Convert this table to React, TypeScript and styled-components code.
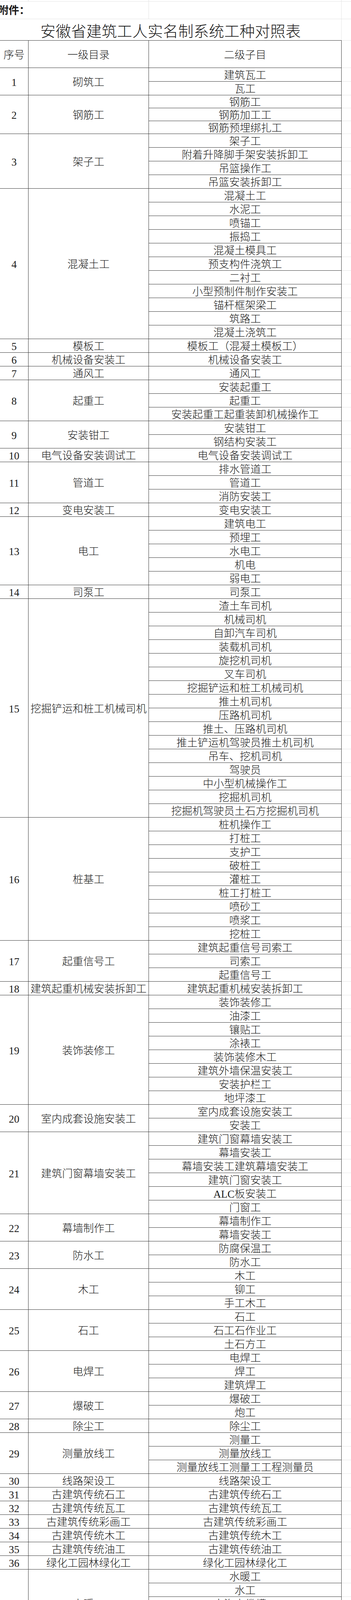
import * as React from 'react';
import styled, { createGlobalStyle } from 'styled-components';

const INK = '#1a1a1a';
const RULE = '#3a3a3a';
const GRID = '#e4e4e4';

const GlobalStyle = createGlobalStyle`
  html, body {
    margin: 0;
    padding: 0;
    background: #fff;
    overflow: hidden;
  }
  body {
    font-family: "Liberation Serif", "Noto Sans CJK SC", serif;
    color: ${INK};
  }
`;

// 一级目录 + 二级子目
const groups: [string, string[]][] = [
  ['砌筑工', ['建筑瓦工', '瓦工']],
  ['钢筋工', ['钢筋工', '钢筋加工工', '钢筋预埋绑扎工']],
  ['架子工', ['架子工', '附着升降脚手架安装拆卸工', '吊篮操作工', '吊篮安装拆卸工']],
  ['混凝土工', ['混凝土工', '水泥工', '喷锚工', '振捣工', '混凝土模具工', '预支构件浇筑工', '二衬工', '小型预制件制作安装工', '锚杆框架梁工', '筑路工', '混凝土浇筑工']],
  ['模板工', ['模板工（混凝土模板工）']],
  ['机械设备安装工', ['机械设备安装工']],
  ['通风工', ['通风工']],
  ['起重工', ['安装起重工', '起重工', '安装起重工起重装卸机械操作工']],
  ['安装钳工', ['安装钳工', '钢结构安装工']],
  ['电气设备安装调试工', ['电气设备安装调试工']],
  ['管道工', ['排水管道工', '管道工', '消防安装工']],
  ['变电安装工', ['变电安装工']],
  ['电工', ['建筑电工', '预埋工', '水电工', '机电', '弱电工']],
  ['司泵工', ['司泵工']],
  ['挖掘铲运和桩工机械司机', ['渣土车司机', '机械司机', '自卸汽车司机', '装载机司机', '旋挖机司机', '叉车司机', '挖掘铲运和桩工机械司机', '推土机司机', '压路机司机', '推土、压路机司机', '推土铲运机驾驶员推土机司机', '吊车、挖机司机', '驾驶员', '中小型机械操作工', '挖掘机司机', '挖掘机驾驶员土石方挖掘机司机']],
  ['桩基工', ['桩机操作工', '打桩工', '支护工', '破桩工', '灌桩工', '桩工打桩工', '喷砂工', '喷浆工', '挖桩工']],
  ['起重信号工', ['建筑起重信号司索工', '司索工', '起重信号工']],
  ['建筑起重机械安装拆卸工', ['建筑起重机械安装拆卸工']],
  ['装饰装修工', ['装饰装修工', '油漆工', '镶贴工', '涂裱工', '装饰装修木工', '建筑外墙保温安装工', '安装护栏工', '地坪漆工']],
  ['室内成套设施安装工', ['室内成套设施安装工', '安装工']],
  ['建筑门窗幕墙安装工', ['建筑门窗幕墙安装工', '幕墙安装工', '幕墙安装工建筑幕墙安装工', '建筑门窗安装工', 'ALC板安装工', '门窗工']],
  ['幕墙制作工', ['幕墙制作工', '幕墙安装工']],
  ['防水工', ['防腐保温工', '防水工']],
  ['木工', ['木工', '铆工', '手工木工']],
  ['石工', ['石工', '石工石作业工', '土石方工']],
  ['电焊工', ['电焊工', '焊工', '建筑焊工']],
  ['爆破工', ['爆破工', '炮工']],
  ['除尘工', ['除尘工']],
  ['测量放线工', ['测量工', '测量放线工', '测量放线工测量工工程测量员']],
  ['线路架设工', ['线路架设工']],
  ['古建筑传统石工', ['古建筑传统石工']],
  ['古建筑传统瓦工', ['古建筑传统瓦工']],
  ['古建筑传统彩画工', ['古建筑传统彩画工']],
  ['古建筑传统木工', ['古建筑传统木工']],
  ['古建筑传统油工', ['古建筑传统油工']],
  ['绿化工园林绿化工', ['绿化工园林绿化工']],
  ['水暖工', ['水暖工', '水工', '水沟电缆槽工', '水井工', '看水工']],
  ['建筑起重机械司机', ['建筑起重机械司机']],
  ['金属工', ['金属工']],
  ['管理人员', ['安全员', '材料员', '资料员', '技术员', '财务', '仓库管理员', '实验员', '土工试验员', '质检员', '其他管理人员']],
  ['杂工', ['值班员', '辅助工（小工）', '厨师', '炊事员', '帮厨', '后勤', '保洁员', '清洁工', '道路巡视养护工道路养护工', '机动清扫工道路清扫工', '环卫机动车驾驶员', '保安']],
  ['其他', ['修理工', '机械维修保养工', '工程机械修理工', '重油制气工（油制气工）', '盾构机操作工', '隧道开挖工', '台车工', '试验工', '智能楼宇管理员', '电梯安装维修工', '司钻员', '接触网工', '物业管理员', '后注浆工', '灌浆工']],
];

// the 钢筋工 rows are a little lower in the sheet
const rowHeight = (group: number) => (group === 1 ? 33 : 35);

const Sheet = styled.div`
  display: grid;
  grid-template-columns: 85px 308px 493px 24px;
  width: 910px;
  margin-left: -12px;
`;

const GridCell = styled.div<{ $h: number; $col: number; $edge?: boolean }>`
  grid-column: ${(p) => p.$col};
  height: ${(p) => p.$h}px;
  box-sizing: border-box;
  border-bottom: ${(p) => (p.$edge === false ? 'none' : `1px solid ${GRID}`)};
  border-right: ${(p) => (p.$col < 4 ? `1px solid ${GRID}` : 'none')};
`;

const Notice = styled.div`
  grid-column: 1 / 3;
  height: 45px;
  box-sizing: border-box;
  border-bottom: 1px solid ${GRID};
  border-right: 1px solid ${GRID};
  display: flex;
  align-items: center;
  padding: 3px 0 0 7px;
  font-size: 27px;
  font-weight: 700;
  line-height: 1;
  white-space: nowrap;
`;

const Title = styled.div`
  grid-column: 1 / 4;
  height: 54px;
  box-sizing: border-box;
  border-right: 1px solid ${GRID};
  display: flex;
  align-items: center;
  justify-content: center;
  padding-top: 8px;
  padding-left: 12px;
  font-size: 39px;
  font-weight: 300;
  line-height: 1;
  letter-spacing: 0.2px;
  white-space: nowrap;
`;

const Cell = styled.div<{ $col: number; $span?: number; $h?: number; $head?: boolean }>`
  grid-column: ${(p) => p.$col};
  grid-row: ${(p) => (p.$span ? `span ${p.$span}` : 'auto')};
  height: ${(p) => (p.$h ? `${p.$h}px` : 'auto')};
  box-sizing: border-box;
  border-top: ${(p) => (p.$head ? `1px solid ${RULE}` : 'none')};
  border-bottom: 1px solid ${RULE};
  border-right: 1px solid ${RULE};
  display: flex;
  align-items: center;
  justify-content: center;
  padding-top: 5px;
  padding-left: ${(p) => (p.$col === 1 ? '12px' : '0')};
  font-size: 27px;
  font-weight: 300;
  line-height: 1;
  white-space: nowrap;
  overflow: hidden;
`;

const Gutter = styled.div<{ $h: number; $head?: boolean }>`
  grid-column: 4;
  height: ${(p) => p.$h}px;
  box-sizing: border-box;
  border-top: ${(p) => (p.$head ? `1px solid ${GRID}` : 'none')};
  border-bottom: 1px solid ${GRID};
`;

const Group: React.FC<{ index: number; name: string; items: string[] }> = ({ index, name, items }) => {
  const h = rowHeight(index);
  return (
    <>
      <Cell $col={1} $span={items.length}>{index + 1}</Cell>
      <Cell $col={2} $span={items.length}>{name}</Cell>
      {items.map((item, i) => (
        <React.Fragment key={i}>
          <Cell $col={3} $h={h}>{item}</Cell>
          <Gutter $h={h} />
        </React.Fragment>
      ))}
    </>
  );
};

export default function App() {
  return (
    <>
      <GlobalStyle />
      <Sheet>
        {[1, 2, 3, 4].map((c) => (
          <GridCell key={c} $col={c} $h={4} />
        ))}

        <Notice>附件：</Notice>
        <GridCell $col={3} $h={45} />
        <GridCell $col={4} $h={45} />

        <Title>安徽省建筑工人实名制系统工种对照表</Title>
        <GridCell $col={4} $h={54} $edge={false} />

        <Cell $col={1} $h={71} $head>序号</Cell>
        <Cell $col={2} $h={71} $head>一级目录</Cell>
        <Cell $col={3} $h={71} $head>二级子目</Cell>
        <Gutter $h={71} $head />

        {groups.map(([name, items], i) => (
          <Group key={i} index={i} name={name} items={items} />
        ))}

        {[35, 35, 30].map((h, r) =>
          [1, 2, 3, 4].map((c) => <GridCell key={`${r}-${c}`} $col={c} $h={h} $edge={r < 2} />)
        )}
      </Sheet>
    </>
  );
}
